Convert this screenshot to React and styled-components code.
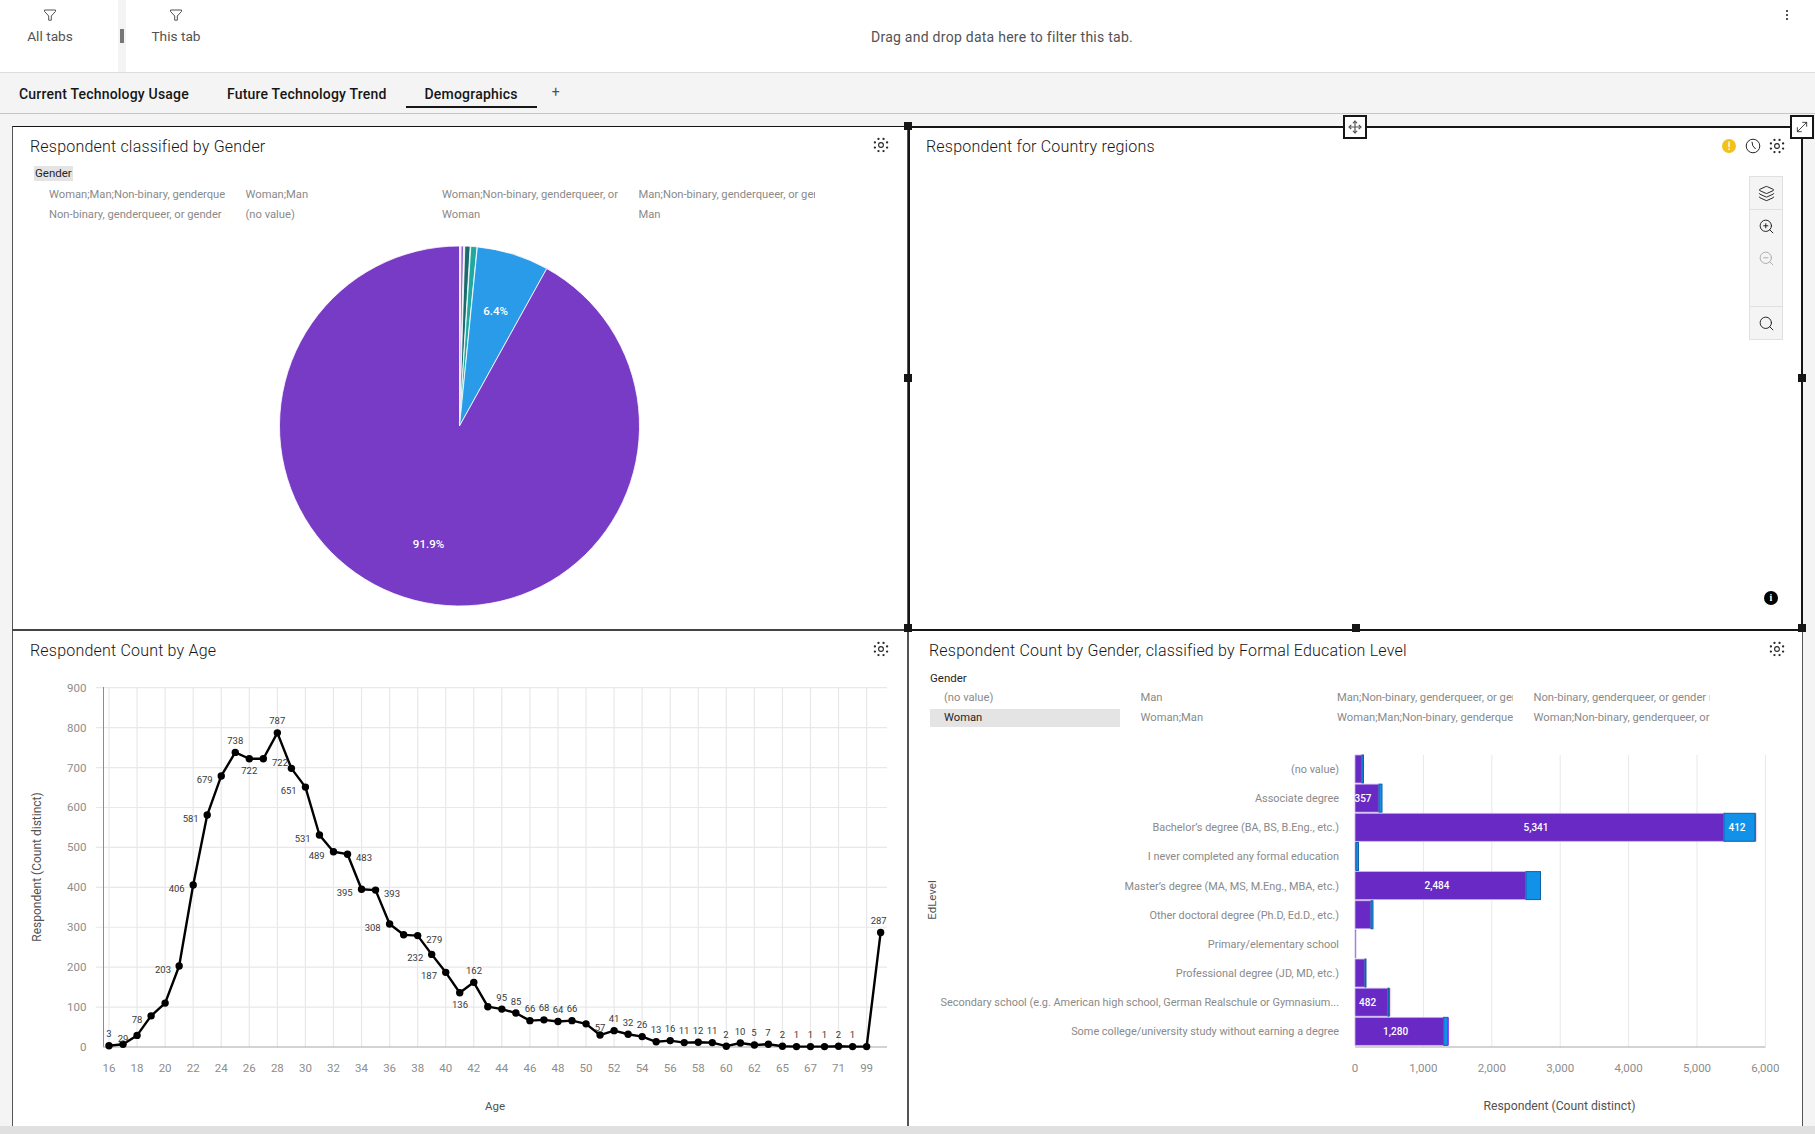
import styled, { createGlobalStyle } from "styled-components";
import { Layers, Search, ZoomIn, ZoomOut, Move, MoveDiagonal } from "lucide-react";

const GlobalStyle = createGlobalStyle`
  html, body {
    margin: 0;
    padding: 0;
    background: #f4f4f4;
  }
  body {
    font-family: "Roboto", "Liberation Sans", sans-serif;
    color: #161616;
  }
`;

const Page = styled.div`
  width: 1815px;
  height: 1134px;
  display: flex;
  flex-direction: column;
  overflow: hidden;
  background: #f4f4f4;
`;

const FilterBar = styled.div`
  flex: none;
  height: 72px;
  display: flex;
  background: #fff;
  border-bottom: 1px solid #dcdcdc;
`;

const FilterCell = styled.div`
  width: 100px;
  padding-top: 8px;
  display: flex;
  flex-direction: column;
  align-items: center;
  gap: 6px;
  font-size: 13.7px;
  color: #525252;
`;

const FilterDivider = styled.div`
  width: 8px;
  margin-left: 18px;
  background: #f4f4f4;
  display: flex;
  justify-content: center;
  padding-top: 29px;
`;

const Grip = styled.div`
  width: 4px;
  height: 14px;
  background: #777;
`;

const DropHint = styled.div`
  flex: 1;
  padding: 29px 0 0 8px;
  text-align: center;
  font-size: 14px;
  color: #525252;
  letter-spacing: 0.26px;
`;

const Kebab = styled.div`
  width: 37px;
  padding: 10px 0 0 8px;
  display: flex;
  flex-direction: column;
  gap: 2px;

  span {
    width: 2px;
    height: 2px;
    margin-left: 8px;
    background: #525252;
  }
`;

const TabBar = styled.div`
  flex: none;
  height: 40px;
  display: flex;
  align-items: stretch;
  border-bottom: 1px solid #c6c6c6;
`;

const Tab = styled.div`
  padding: 0 19px 4px;
  height: 35px;
  display: flex;
  align-items: flex-end;
  box-sizing: border-box;
  font-size: 14px;
  font-weight: 500;
  letter-spacing: 0.2px;
  border-bottom: 2px solid ${(p) => (p.$active ? "#161616" : "transparent")};
`;

const AddTab = styled.div`
  padding: 11px 0 0 15px;
  font-size: 14px;
  color: #525252;
`;

const Canvas = styled.div`
  flex: none;
  height: 1000px;
  margin: 12px 0 0 12px;
  display: grid;
  grid-template-columns: 896px 895px;
  grid-template-rows: 505px 495px;
`;

const Panel = styled.section`
  position: relative;
  box-sizing: border-box;
  display: flex;
  flex-direction: column;
  background: #fff;
  border-left: ${(p) => (p.$sideBorder ? "1px solid #555" : "none")};
  border-top: ${(p) => (p.$topBorder ? "1px solid #161616" : "none")};
  border-bottom: ${(p) => (p.$bottomBorder ? "2px solid #444" : "none")};
  border-right: ${(p) => (p.$rightBorder ? "1px solid #555" : "none")};
`;

const SelectedPanel = styled(Panel)`
  border: 2px solid #161616;
`;

const PanelHeader = styled.header`
  flex: none;
  height: ${(p) => p.$height}px;
  padding: ${(p) => p.$top}px ${(p) => p.$right}px 0 ${(p) => p.$left}px;
  box-sizing: border-box;
  display: flex;
  justify-content: space-between;
  font-size: 16px;
  font-weight: 300;
  color: #161616;
  letter-spacing: 0.2px;
`;

const HeaderIcons = styled.div`
  display: flex;
  gap: 8px;
  padding-top: 1px;
  align-items: flex-start;
`;

const LegendTitle = styled.div`
  align-self: flex-start;
  margin-left: ${(p) => p.$left}px;
  padding: 0 1px;
  height: 15px;
  line-height: 15px;
  font-size: 11.5px;
  color: #262626;
  background: ${(p) => (p.$active ? "#e4e4e4" : "transparent")};
`;

const LegendGrid = styled.div`
  margin: ${(p) => p.$top}px 0 ${(p) => p.$bottom}px ${(p) => p.$left}px;
  display: grid;
  grid-template-columns: repeat(4, 190px);
  grid-auto-rows: 20px;
  column-gap: 6.5px;
`;

const LegendItem = styled.div`
  height: 18px;
  margin-top: 1px;
  padding-left: 14px;
  line-height: 18px;
  font-size: 11.2px;
  white-space: nowrap;
  overflow: hidden;
  box-sizing: border-box;
  color: ${(p) => (p.$active ? "#262626" : "#8a8a8a")};
  background: ${(p) => (p.$active ? "#e4e4e4" : "transparent")};
`;

const ChartSvg = styled.svg`
  display: block;
  flex: none;
  font-family: "Roboto", "Liberation Sans", sans-serif;
`;

const MapTools = styled.div`
  position: absolute;
  top: 48px;
  right: 18px;
  width: 32px;
  border: 1px solid #e0e0e0;
  background: #f4f4f4;
  display: flex;
  flex-direction: column;
`;

const MapTool = styled.div`
  height: ${(p) => p.$height}px;
  display: flex;
  align-items: center;
  justify-content: center;
  border-bottom: ${(p) => (p.$divided ? "1px solid #e0e0e0" : "none")};
  color: ${(p) => (p.$muted ? "#a8a8a8" : "#161616")};
`;

const InfoBadge = styled.div`
  position: absolute;
  right: 23px;
  bottom: 24px;
  width: 14px;
  height: 14px;
  border-radius: 50%;
  background: #000;
  color: #fff;
  font: 700 10px/14px "Liberation Serif", serif;
  text-align: center;
`;

const Handle = styled.div`
  position: absolute;
  left: ${(p) => p.$x};
  top: ${(p) => p.$y};
  width: 8px;
  height: 8px;
  margin: -4px 0 0 -4px;
  background: #161616;
  z-index: 3;
`;

const DragBox = styled.div`
  position: absolute;
  left: ${(p) => p.$x};
  top: -13px;
  width: 24px;
  height: 24px;
  margin-left: ${(p) => p.$shift}px;
  box-sizing: border-box;
  background: #fff;
  border: 2px solid #161616;
  color: ${(p) => p.$color};
  display: flex;
  align-items: center;
  justify-content: center;
  z-index: 4;
`;

const BottomBar = styled.div`
  flex: none;
  height: 8px;
  background: #e0e0e0;
`;

function FilterIcon() {
  return (
    <svg width="14" height="14" viewBox="0 0 14 14" fill="none" stroke="#525252" strokeWidth="1">
      <path d="M1.5 2h11v1.4L8.3 8v4.2H5.7V8L1.5 3.4z" />
    </svg>
  );
}

function GearIcon() {
  const dots = [0, 1, 2, 3, 4, 5, 6, 7].map((i) => {
    const a = (i * Math.PI) / 4 + Math.PI / 8;
    return [8 + 6.6 * Math.cos(a), 8 + 6.6 * Math.sin(a)];
  });
  return (
    <svg width="16" height="16" viewBox="0 0 16 16" fill="#262626">
      <circle cx="8" cy="8" r="2.4" fill="none" stroke="#262626" strokeWidth="1.1" />
      {dots.map(([x, y], i) => (
        <circle key={i} cx={x} cy={y} r="1.15" />
      ))}
    </svg>
  );
}

function ClockIcon() {
  return (
    <svg width="16" height="16" viewBox="0 0 16 16" fill="none" stroke="#262626" strokeWidth="1">
      <circle cx="8" cy="8" r="6.8" />
      <path d="M7 3.8 L7.8 7.8 L10.6 11" />
    </svg>
  );
}

function WarnIcon() {
  return (
    <svg width="16" height="16" viewBox="0 0 16 16">
      <circle cx="8" cy="8" r="7" fill="#f1c21b" />
      <rect x="7.3" y="3.6" width="1.4" height="5.6" fill="#fff" />
      <rect x="7.3" y="10.4" width="1.4" height="1.6" fill="#fff" />
    </svg>
  );
}

const PIE = { cx: 459.5, cy: 426, r: 180 };

const pieSlices = [
  { from: 0, to: 0.5, color: "#d9c7ef" },
  { from: 0.5, to: 1.3, color: "#8a5bc9" },
  { from: 1.7, to: 3.4, color: "#1d6a6e" },
  { from: 3.6, to: 5.6, color: "#1fa99f" },
  { from: 5.7, to: 29, color: "#2a9be8" },
  { from: 29, to: 360, color: "#783bc5" },
];

function wedge(from, to) {
  const pt = (deg) => {
    const a = ((deg - 90) * Math.PI) / 180;
    return `${PIE.cx + PIE.r * Math.cos(a)} ${PIE.cy + PIE.r * Math.sin(a)}`;
  };
  const large = to - from > 180 ? 1 : 0;
  return `M${PIE.cx} ${PIE.cy}L${pt(from)}A${PIE.r} ${PIE.r} 0 ${large} 1 ${pt(to)}Z`;
}

function GenderPie() {
  return (
    <ChartSvg width="894" height="400" viewBox="13 225 894 400">
      {pieSlices.map((s) => (
        <path key={s.from} d={wedge(s.from, s.to)} fill={s.color} stroke="#fff" strokeWidth="0.8" />
      ))}
      <text x="495.7" y="315" textAnchor="middle" fontSize="11.5" fontWeight="500" fill="#fff">6.4%</text>
      <text x="428.5" y="548" textAnchor="middle" fontSize="11.5" fontWeight="500" fill="#fff">91.9%</text>
    </ChartSvg>
  );
}

const ageValues = [
  3, 7, 29, 78, 110, 203, 406, 581, 679, 738, 722, 722, 787, 698, 651, 531, 489, 483, 395, 393,
  308, 281, 279, 232, 187, 136, 162, 101, 95, 85, 66, 68, 64, 66, 58, 30, 41, 32, 26, 13, 16, 11,
  12, 11, 2, 10, 5, 7, 2, 1, 1, 1, 2, 1, 1, 287,
];

const ageLabels = [
  ["3", 109, 1033], ["29", 123, 1038], ["78", 137, 1019], ["203", 163, 969], ["406", 176.7, 888],
  ["581", 190.7, 818], ["679", 204.7, 779.7], ["738", 235.3, 740.3], ["722", 249.3, 770.7],
  ["722", 280, 762], ["787", 277.3, 720], ["651", 288.7, 790], ["531", 302.7, 838.3],
  ["489", 316.7, 855.3], ["483", 364, 857], ["395", 344.7, 892.3], ["393", 392, 893],
  ["308", 372.7, 927], ["279", 434.3, 939.3], ["232", 415.3, 957], ["187", 429, 975.7],
  ["136", 460, 1004.3], ["162", 474, 970.3], ["95", 501.7, 997.3], ["85", 516, 1001.3],
  ["66", 530, 1008.3], ["68", 544, 1007.3], ["64", 558, 1009.3], ["66", 572, 1008.3],
  ["57", 600, 1027.3], ["41", 614, 1018.3], ["32", 628, 1022.3], ["26", 642, 1024.3],
  ["13", 656, 1029.7], ["16", 670, 1028.3], ["11", 684, 1030.3], ["12", 698, 1030.3],
  ["11", 712, 1030.3], ["2", 726, 1034.3], ["10", 740, 1031.3], ["5", 754, 1032.7],
  ["7", 768, 1032.3], ["2", 782.3, 1034.3], ["1", 796.3, 1034.3], ["1", 810.3, 1034.3],
  ["1", 824.3, 1034.3], ["2", 838.3, 1034.3], ["1", 852.3, 1034.3], ["287", 878.7, 920.3],
];

const ageTicks = [
  16, 18, 20, 22, 24, 26, 28, 30, 32, 34, 36, 38, 40, 42, 44, 46, 48, 50, 52, 54, 56, 58, 60, 62,
  65, 67, 71, 99,
];

const ageX = (i) => 109 + i * 14.03;
const ageY = (v) => 1047 - v * 0.3992;

function AgeChart() {
  const points = ageValues.map((v, i) => `${ageX(i)},${ageY(v)}`).join(" ");
  return (
    <ChartSvg width="894" height="466" viewBox="13 660 894 466">
      {[100, 200, 300, 400, 500, 600, 700, 800, 900].map((v) => (
        <line key={v} x1="96" x2="887" y1={ageY(v)} y2={ageY(v)} stroke="#e8e8e8" strokeWidth="1.2" />
      ))}
      {ageTicks.map((t, i) => (
        <line key={i} x1={ageX(i * 2)} x2={ageX(i * 2)} y1="687" y2="1047" stroke="#e8e8e8" strokeWidth="1.2" />
      ))}
      <line x1="103.5" x2="103.5" y1="687" y2="1047" stroke="#8d8d8d" />
      <line x1="103" x2="887" y1="1047" y2="1047" stroke="#a8a8a8" strokeWidth="1.2" />
      {[0, 100, 200, 300, 400, 500, 600, 700, 800, 900].map((v) => (
        <text key={v} x="86.5" y={ageY(v) + 4} textAnchor="end" fontSize="11.5" fill="#8d8d8d">{v}</text>
      ))}
      {ageTicks.map((t, i) => (
        <text key={i} x={ageX(i * 2)} y="1072" textAnchor="middle" fontSize="11.5" fill="#8d8d8d">{t}</text>
      ))}
      <polyline points={points} fill="none" stroke="#000" strokeWidth="2.4" strokeLinejoin="round" />
      {ageValues.map((v, i) => (
        <circle key={i} cx={ageX(i)} cy={ageY(v)} r="3.7" fill="#000" />
      ))}
      {ageLabels.map(([text, x, y], i) => (
        <text key={i} x={x} y={y + 3.5} textAnchor="middle" fontSize="9.5" fill="#393939">{text}</text>
      ))}
      <text x="495" y="1110" textAnchor="middle" fontSize="11.5" fill="#525252">Age</text>
      <text x="0" y="0" transform="translate(41 867) rotate(-90)" textAnchor="middle" fontSize="12" fill="#525252">
        Respondent (Count distinct)
      </text>
    </ChartSvg>
  );
}

const eduRows = [
  { name: "(no value)", purple: 7, blue: 1.5 },
  { name: "Associate degree", purple: 24, blue: 3, label: "357", labelX: 1364 },
  { name: "Bachelor’s degree (BA, BS, B.Eng., etc.)", purple: 369, blue: 31, end: "#e0245e", label: "5,341", labelX: 1537, blueLabel: "412", blueLabelX: 1738 },
  { name: "I never completed any formal education", purple: 1, blue: 2.5 },
  { name: "Master’s degree (MA, MS, M.Eng., MBA, etc.)", purple: 171, blue: 14.5, label: "2,484", labelX: 1438 },
  { name: "Other doctoral degree (Ph.D, Ed.D., etc.)", purple: 16, blue: 2 },
  { name: "Primary/elementary school", purple: 1, blue: 0 },
  { name: "Professional degree (JD, MD, etc.)", purple: 10, blue: 1 },
  { name: "Secondary school (e.g. American high school, German Realschule or Gymnasium...", purple: 33, blue: 1, end: "#e0245e", label: "482", labelX: 1368.6 },
  { name: "Some college/university study without earning a degree", purple: 88.7, blue: 4, end: "#8a3ffc", label: "1,280", labelX: 1396.6 },
];

const BAR_LEFT = 1356;
const eduX = (v) => BAR_LEFT + (v / 1000) * 68.4;

function EducationChart() {
  return (
    <ChartSvg width="893" height="381" viewBox="910 745 893 381">
      {[1000, 2000, 3000, 4000, 5000, 6000].map((v) => (
        <line key={v} x1={eduX(v)} x2={eduX(v)} y1="755" y2="1047" stroke="#e8e8e8" />
      ))}
      {eduRows.map((row, i) => {
        const y = 755 + i * 29.15;
        return (
          <g key={row.name}>
            <text x="1340" y={y + 18} textAnchor="end" fontSize="10.9" fill="#8a8a8a">{row.name}</text>
            <rect x={BAR_LEFT} y={y} width={row.purple} height="28" fill="#6929c4" stroke="#c9b2ee" strokeWidth="0.8" />
            {row.blue > 0 && (
              <rect x={BAR_LEFT + row.purple} y={y} width={row.blue} height="28" fill="#1192e8" stroke="#0f62a8" strokeWidth="1" />
            )}
            {row.end && (
              <rect x={BAR_LEFT + row.purple + row.blue} y={y} width="1.2" height="28" fill={row.end} />
            )}
            {row.label && (
              <text x={row.labelX} y={y + 17.5} textAnchor="middle" fontSize="10" fontWeight="500" fill="#fff">{row.label}</text>
            )}
            {row.blueLabel && (
              <text x={row.blueLabelX} y={y + 17.5} textAnchor="middle" fontSize="10" fontWeight="500" fill="#fff">{row.blueLabel}</text>
            )}
          </g>
        );
      })}
      <line x1={BAR_LEFT} x2={eduX(6000)} y1="1047" y2="1047" stroke="#a8a8a8" strokeWidth="1.2" />
      {[0, 1000, 2000, 3000, 4000, 5000, 6000].map((v) => (
        <text key={v} x={eduX(v)} y="1072" textAnchor="middle" fontSize="11.5" fill="#8d8d8d">
          {v.toLocaleString("en-US")}
        </text>
      ))}
      <text x="1560.5" y="1110" textAnchor="middle" fontSize="12.2" fill="#525252">Respondent (Count distinct)</text>
      <text x="0" y="0" transform="translate(937 900) rotate(-90)" textAnchor="middle" fontSize="11.5" fill="#525252">EdLevel</text>
    </ChartSvg>
  );
}

function Legend({ items, left, top, bottom, activeItem }) {
  return (
    <LegendGrid $left={left} $top={top} $bottom={bottom}>
      {items.map((item) => (
        <LegendItem key={item} $active={item === activeItem}>{item}</LegendItem>
      ))}
    </LegendGrid>
  );
}

const topLegend = [
  "Woman;Man;Non-binary, genderqueer, or gender non-conforming",
  "Woman;Man",
  "Woman;Non-binary, genderqueer, or gender non-conforming",
  "Man;Non-binary, genderqueer, or gender non-conforming",
  "Non-binary, genderqueer, or gender non-conforming",
  "(no value)",
  "Woman",
  "Man",
];

const bottomLegend = [
  "(no value)",
  "Man",
  "Man;Non-binary, genderqueer, or gender non-conforming",
  "Non-binary, genderqueer, or gender non-conforming",
  "Woman",
  "Woman;Man",
  "Woman;Man;Non-binary, genderqueer, or gender non-conforming",
  "Woman;Non-binary, genderqueer, or gender non-conforming",
];

export default function App() {
  return (
    <Page>
      <GlobalStyle />
      <FilterBar>
        <FilterCell>
          <FilterIcon />
          All tabs
        </FilterCell>
        <FilterDivider>
          <Grip />
        </FilterDivider>
        <FilterCell>
          <FilterIcon />
          This tab
        </FilterCell>
        <DropHint>Drag and drop data here to filter this tab.</DropHint>
        <Kebab>
          <span />
          <span />
          <span />
        </Kebab>
      </FilterBar>

      <TabBar>
        <Tab>Current Technology Usage</Tab>
        <Tab>Future Technology Trend</Tab>
        <Tab $active>Demographics</Tab>
        <AddTab>+</AddTab>
      </TabBar>

      <Canvas>
        <Panel $sideBorder $topBorder $bottomBorder $rightBorder>
          <PanelHeader $height={39} $top={9.5} $left={17} $right={18}>
            Respondent classified by Gender
            <GearIcon />
          </PanelHeader>
          <LegendTitle $left={21} $active>Gender</LegendTitle>
          <Legend items={topLegend} left={22} top={4} bottom={0} />
          <GenderPie />
        </Panel>

        <SelectedPanel>
          <PanelHeader $height={36} $top={9} $left={16} $right={16}>
            Respondent for Country regions
            <HeaderIcons>
              <WarnIcon />
              <ClockIcon />
              <GearIcon />
            </HeaderIcons>
          </PanelHeader>
          <MapTools>
            <MapTool $height={32} $divided><Layers size={17} strokeWidth={1.3} /></MapTool>
            <MapTool $height={32}><ZoomIn size={17} strokeWidth={1.3} /></MapTool>
            <MapTool $height={32} $muted><ZoomOut size={17} strokeWidth={1.3} /></MapTool>
            <MapTool $height={32} $divided />
            <MapTool $height={32}><Search size={17} strokeWidth={1.3} /></MapTool>
          </MapTools>
          <InfoBadge>i</InfoBadge>
          <Handle $x="-2px" $y="-2px" />
          <Handle $x="-2px" $y="calc(50% - 1px)" />
          <Handle $x="-2px" $y="calc(100% - 1px)" />
          <Handle $x="50%" $y="calc(100% - 1px)" />
          <Handle $x="calc(100% + 1px)" $y="calc(50% - 1px)" />
          <Handle $x="calc(100% + 1px)" $y="calc(100% - 1px)" />
          <DragBox $x="50%" $shift={-13} $color="#525252">
            <Move size={14} strokeWidth={2} />
          </DragBox>
          <DragBox $x="100%" $shift={-11} $color="#161616">
            <MoveDiagonal size={16} strokeWidth={1.2} />
          </DragBox>
        </SelectedPanel>

        <Panel $sideBorder $rightBorder>
          <PanelHeader $height={29} $top={10} $left={17} $right={18}>
            Respondent Count by Age
            <GearIcon />
          </PanelHeader>
          <AgeChart />
        </Panel>

        <Panel $sideBorder $rightBorder>
          <PanelHeader $height={39.5} $top={10} $left={20} $right={17}>
            Respondent Count by Gender, classified by Formal Education Level
            <GearIcon />
          </PanelHeader>
          <LegendTitle $left={20}>Gender</LegendTitle>
          <Legend items={bottomLegend} left={21} top={2.5} bottom={17} activeItem="Woman" />
          <EducationChart />
        </Panel>
      </Canvas>
      <BottomBar />
    </Page>
  );
}
